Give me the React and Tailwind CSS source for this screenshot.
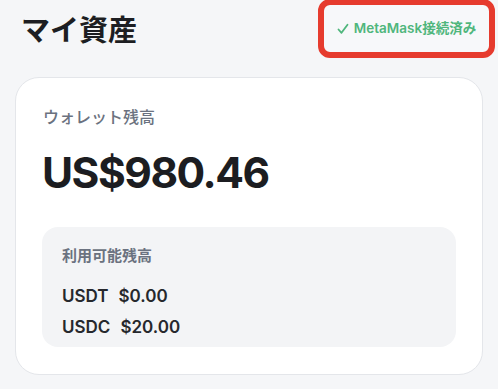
import React from 'react';

const App = () => {
  return (
    <div
      className="w-[498px] h-[389px] overflow-hidden bg-[#f5f6f8] font-['Inter','Noto_Sans_CJK_JP',sans-serif]"
    >
      {/* ヘッダー */}
      <div className="flex justify-between items-start pl-[21px] pr-[3px]">
        <h1 className="mt-[13px] text-[29px] leading-[36px] font-bold text-[#1d1e22]">
          マイ資産
        </h1>
        <div className="-mt-[1px] h-[59px] w-[177px] flex items-center justify-center rounded-[12px] border-[6px] border-[#e63b2e] bg-[#f7f8fa]">
          <span className="flex items-center text-[13.5px] font-semibold text-[#4fb67c]">
            <svg width="12" height="12" viewBox="0 0 12 12" className="mr-[5px]">
              <path d="M1.5 6.5 L4.5 9.8 L10.5 1.8" fill="none" stroke="currentColor" strokeWidth="1.8" strokeLinecap="round" strokeLinejoin="round" />
            </svg>
            MetaMask接続済み
          </span>
        </div>
      </div>

      {/* 残高カード */}
      <div className="mx-[15px] mt-[19px] rounded-3xl border border-[#e4e6ea] bg-white px-[26px] pt-[27px] pb-[27px]">
        <p className="text-[16px] leading-[24px] font-medium text-[#6b7280] pl-[1px]">
          ウォレット残高
        </p>
        <p className="mt-[22px] text-[42.5px] leading-[44px] font-bold tracking-[-0.035em] text-[#1c1d21]">
          US$980.46
        </p>

        <div className="mt-[32px] rounded-2xl bg-[#f3f4f6] px-[20px] pt-[17px] pb-[8px]">
          <p className="text-[15px] leading-[24px] font-semibold text-[#6b7280]">
            利用可能残高
          </p>
          <div className="mt-[16px] flex flex-col gap-[7px] text-[17px] leading-[24px] font-semibold text-[#26282d]">
            <div className="flex gap-[10px]">
              <span>USDT</span>
              <span>$0.00</span>
            </div>
            <div className="flex gap-[10px]">
              <span>USDC</span>
              <span>$20.00</span>
            </div>
          </div>
        </div>
      </div>
    </div>
  );
};

export default App;
